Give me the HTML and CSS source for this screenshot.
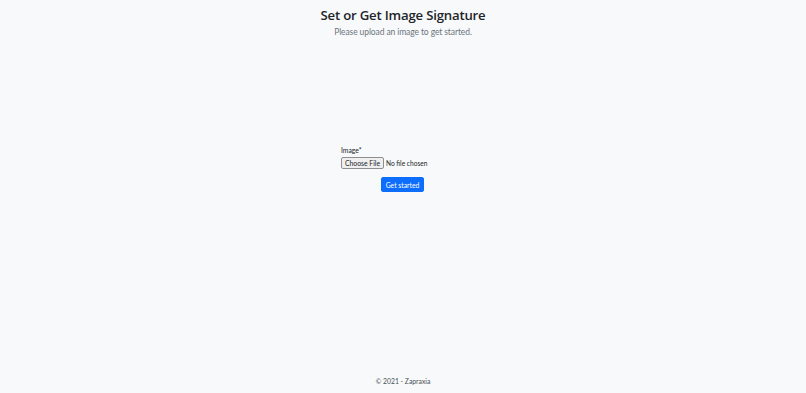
FILE: index.html
```html
<!DOCTYPE html>
<html lang="en">
<head>
<meta charset="utf-8">
<title>Set or Get Image Signature</title>
<link rel="stylesheet" href="styles.css">
</head>
<body>
<div class="page">
  <header class="hero">
    <h1 class="title">Set or Get Image Signature</h1>
    <p class="lead">Please upload an image to get started.</p>
  </header>
  <main class="content">
    <form class="upload">
      <label class="label" for="img">Image*</label>
      <input class="file" id="img" type="file">
      <div class="actions">
        <button class="btn" type="button">Get started</button>
      </div>
    </form>
  </main>
  <footer class="footer">© 2021 - Zapraxia</footer>
</div>
</body>
</html>
```
FILE: styles.css
```css
html, body {
  margin: 0;
  padding: 0;
  background: #f8f9fa;
  color: #212529;
  font-family: Lato, "Liberation Sans", sans-serif;
}
.page {
  display: flex;
  flex-direction: column;
  min-height: 100vh;
  box-sizing: border-box;
}
.hero {
  text-align: center;
  padding-top: 5px;
}
.title {
  margin: 0;
  font-family: "Open Sans", Lato, sans-serif;
  font-size: 13.2px;
  font-weight: 600;
  letter-spacing: -0.2px;
  line-height: 20px;
}
.lead {
  margin: 1px 0 0;
  font-size: 8.5px;
  font-weight: 400;
  letter-spacing: -0.1px;
  color: #6c757d;
  line-height: 13px;
}
.content {
  flex: 1;
  display: flex;
  justify-content: center;
  align-items: flex-start;
  padding-top: 106px;
}
.upload {
  display: flex;
  flex-direction: column;
  width: 124px;
}
.label {
  font-size: 6.8px;
  line-height: 10px;
  margin-bottom: 2px;
}
.file {
  font-size: 6.6px;
  font-family: Lato, "Liberation Sans", sans-serif;
  color: #212529;
  height: 12px;
}
.file::file-selector-button {
  font-family: Lato, "Liberation Sans", sans-serif;
  font-size: 6.8px;
  height: 12px;
  padding: 0 3px;
  margin-right: 2px;
  border: 1px solid #8f8f8f;
  border-radius: 2px;
  background: #efefef;
  color: #212529;
}
.actions {
  display: flex;
  padding-left: 40px;
  margin-top: 8px;
}
.btn {
  background: #0d6efd;
  color: #fff;
  border: 1px solid #0d6efd;
  border-radius: 2px;
  font-family: inherit;
  font-size: 6.8px;
  line-height: 10px;
  padding: 2px 0;
  width: 43px;
  height: 15px;
  white-space: nowrap;
}
.footer {
  text-align: center;
  font-size: 6.8px;
  line-height: 10px;
  padding-bottom: 7px;
  color: #495057;
}
```
